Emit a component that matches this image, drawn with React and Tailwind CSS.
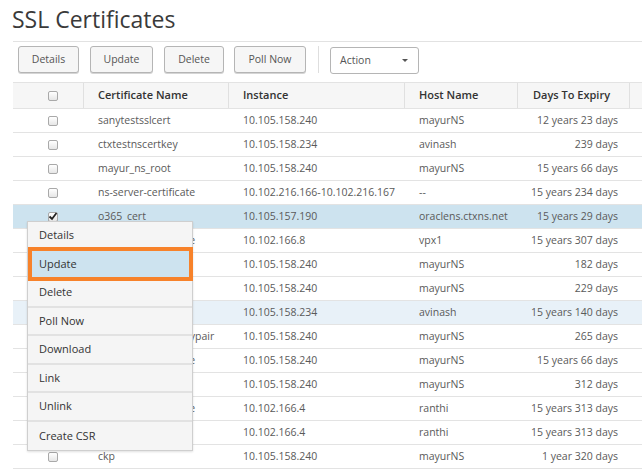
const rows = [
  { name: 'sanytestsslcert', ip: '10.105.158.240', host: 'mayurNS', days: '12 years 23 days' },
  { name: 'ctxtestnscertkey', ip: '10.105.158.234', host: 'avinash', days: '239 days' },
  { name: 'mayur_ns_root', ip: '10.105.158.240', host: 'mayurNS', days: '15 years 66 days' },
  { name: 'ns-server-certificate', ip: '10.102.216.166-10.102.216.167', host: '--', days: '15 years 234 days' },
  { name: 'o365_cert', ip: '10.105.157.190', host: 'oraclens.ctxns.net', days: '15 years 29 days', checked: true },
  { name: 'ns-server-certificate', ip: '10.102.166.8', host: 'vpx1', days: '15 years 307 days' },
  { name: 'mayur_cert', ip: '10.105.158.240', host: 'mayurNS', days: '182 days' },
  { name: 'mayur_key', ip: '10.105.158.240', host: 'mayurNS', days: '229 days' },
  { name: 'avinash_testcert', ip: '10.105.158.234', host: 'avinash', days: '15 years 140 days', hover: true },
  { name: 'ns-server-ecdsa-keypair', ip: '10.105.158.240', host: 'mayurNS', days: '265 days' },
  { name: 'ns-server-certificate', ip: '10.105.158.240', host: 'mayurNS', days: '15 years 66 days' },
  { name: 'mayur_ca', ip: '10.105.158.240', host: 'mayurNS', days: '312 days' },
  { name: 'ns-server-certificate', ip: '10.102.166.4', host: 'ranthi', days: '15 years 313 days' },
  { name: 'ranthi_testcert', ip: '10.102.166.4', host: 'ranthi', days: '15 years 313 days' },
  { name: 'ckp', ip: '10.105.158.240', host: 'mayurNS', days: '1 year 320 days' },
];

const menuItems = ['Details', 'Update', 'Delete', 'Poll Now', 'Download', 'Link', 'Unlink', 'Create CSR'];

function Checkbox({ checked }) {
  return (
    <span className="relative block w-[10px] h-[10px] rounded-[2px] border border-[#a9a9a9] bg-gradient-to-b from-white to-[#e6e6e6]">
      {checked && (
        <svg viewBox="0 0 10 10" className="absolute -left-[1px] -top-[2px] w-[10px] h-[10px]">
          <path d="M1.5 5.5 L4 8 L8.5 2" stroke="#222" strokeWidth="1.8" fill="none" />
        </svg>
      )}
    </span>
  );
}

function Button({ label, width }) {
  return (
    <button className={`${width} h-[27px] rounded-[3px] border border-[#b5b5b5] bg-[#f6f6f6] shadow-[0_1px_0_#d5d5d5] text-[10.5px] text-[#555]`}>
      {label}
    </button>
  );
}

export default function App() {
  return (
    <div className="relative w-[642px] h-[474px] overflow-hidden bg-white font-['Open_Sans',sans-serif]">
      <h1 className="h-[41px] pl-[12px] pt-[3px] text-[23px] leading-[32px] text-[#3a3a3a]">SSL Certificates</h1>

      <div className="ml-[13px] border-t border-[#e2e2e2]">
        {/* toolbar */}
        <div className="h-[40px] flex items-start pt-[4px] pl-[5px]">
          <Button label="Details" width="w-[61px]" />
          <div className="w-[11px]" />
          <Button label="Update" width="w-[63px]" />
          <div className="w-[11px]" />
          <Button label="Delete" width="w-[60px]" />
          <div className="w-[10px]" />
          <Button label="Poll Now" width="w-[72px]" />
          <div className="w-px h-[27px] bg-[#dedede] ml-[12px] mr-[11px]" />
          <div className="mt-[1px] w-[89px] h-[27px] rounded-[3px] border border-[#b5b5b5] bg-white flex items-center justify-between pl-[9px] pr-[10px] text-[10.5px] text-[#555]">
            <span>Action</span>
            <span className="w-0 h-0 border-l-[3.5px] border-r-[3.5px] border-t-[3.5px] border-l-transparent border-r-transparent border-t-[#555]" />
          </div>
        </div>

        {/* table header */}
        <div className="flex h-[27px] bg-[#f6f6f6] border-y border-[#e3e3e3] text-[11px] font-semibold text-[#333]">
          <div className="w-[71px] flex items-center justify-center pl-[9px] border-r border-[#e0e0e0]">
            <Checkbox />
          </div>
          <div className="w-[145px] flex items-center pl-[14px] border-r border-[#e0e0e0]">Certificate Name</div>
          <div className="w-[176px] flex items-center pl-[14px] border-r border-[#e0e0e0]">Instance</div>
          <div className="w-[113px] flex items-center pl-[14px] border-r border-[#e0e0e0]">Host Name</div>
          <div className="w-[112px] flex items-center pl-[15px] border-r border-[#e0e0e0]">Days To Expiry</div>
          <div className="flex-1" />
        </div>

        {/* rows */}
        {rows.map((r, i) => (
          <div
            key={i}
            className={`flex h-[24px] border-b border-[#e3e3e3] text-[10.5px] text-[#5a5a5a] ${
              r.checked ? 'bg-[#cde3ef]' : r.hover ? 'bg-[#e8f1f8]' : 'bg-white'
            }`}
          >
            <div className="w-[71px] flex items-center justify-center pl-[9px]">
              <Checkbox checked={r.checked} />
            </div>
            <div className="w-[145px] flex items-center pl-[14px] whitespace-nowrap">{r.name}</div>
            <div className="w-[176px] flex items-center pl-[14px] whitespace-nowrap">{r.ip}</div>
            <div className="w-[113px] flex items-center pl-[14px] whitespace-nowrap">{r.host}</div>
            <div className="w-[112px] flex items-center justify-end pr-[12px] whitespace-nowrap">{r.days}</div>
            <div className="flex-1" />
          </div>
        ))}
      </div>

      {/* context menu */}
      <div className="absolute left-[27px] top-[221px] w-[166px] border border-[#cfcfcf] bg-[#f5f5f5] shadow-[0_1px_2px_rgba(0,0,0,0.12)]">
        {menuItems.map((m, i) => (
          <div
            key={m}
            className={`relative h-[28.5px] flex items-center pl-[11px] text-[11px] text-[#333] ${
              i < menuItems.length - 1 ? 'border-b-2 border-[#e2e2e2]' : ''
            } ${m === 'Update' ? 'bg-[#cde3ef]' : ''}`}
          >
            {m}
            {m === 'Update' && (
              <span className="absolute -top-[4px] -bottom-[4px] left-0 -right-px border-4 border-[#f7822a]" />
            )}
          </div>
        ))}
      </div>
    </div>
  );
}
